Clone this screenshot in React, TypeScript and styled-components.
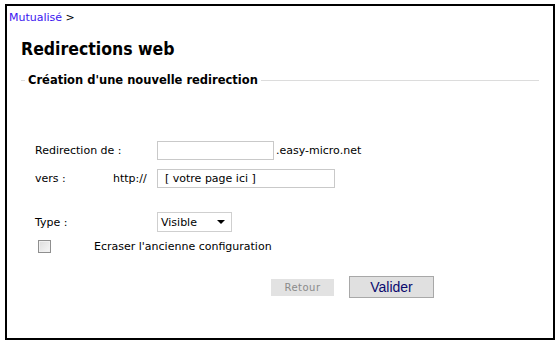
import React from "react";
import styled, { createGlobalStyle } from "styled-components";

const Global = createGlobalStyle`
  html, body { margin: 0; padding: 0; background: #fff; }
  body { font-family: "DejaVu Sans", Verdana, sans-serif; font-size: 11px; color: #000; }
`;

const Frame = styled.div`
  box-sizing: border-box;
  margin: 4px 0 0 5px;
  width: 550px;
  height: 336px;
  border: 2px solid #000;
  padding: 5px 14px 0 14px;
`;

const Breadcrumb = styled.div`
  height: 16px;
  line-height: 14px;
  margin-left: -12px;
  a { color: #3a14f0; text-decoration: none; }
`;

const Title = styled.h1`
  margin: 11px 0 0 0;
  font-family: "DejaVu Sans Condensed", "DejaVu Sans", sans-serif;
  font-stretch: condensed;
  font-size: 17.5px;
  font-weight: bold;
  line-height: 22px;
`;

const Section = styled.fieldset`
  margin: 13px 0 0 0;
  padding: 0;
  border: none;
  border-top: 1px solid #dcdcdc;
`;

const Legend = styled.legend`
  font-size: 11.5px;
  font-weight: bold;
  padding: 0 3px;
  margin-left: 4px;
`;

const Form = styled.div`
  padding: 53px 0 0 14px;
`;

const Row = styled.div<{ $mt?: number }>`
  display: grid;
  grid-template-columns: 78px 44px auto;
  align-items: center;
  margin-top: ${(p) => p.$mt ?? 0}px;
  height: 20px;
  white-space: nowrap;
`;

const Prefix = styled.span``;

const FieldGroup = styled.div`
  display: flex;
  align-items: center;
`;

const TextInput = styled.input<{ $w: number }>`
  box-sizing: border-box;
  width: ${(p) => p.$w}px;
  height: 19px;
  border: 1px solid #c9c9c9;
  padding: 0 7px;
  font-family: "DejaVu Sans", Verdana, sans-serif;
  font-size: 11px;
  color: #000;
  outline: none;
`;

const Suffix = styled.span`
  margin-left: 2px;
`;

const SelectBox = styled.div`
  box-sizing: border-box;
  width: 75px;
  height: 20px;
  border: 1px solid #cfcfcf;
  display: flex;
  align-items: center;
  justify-content: space-between;
  padding: 0 6px 0 3px;
`;

const Caret = styled.span`
  width: 0;
  height: 0;
  border-left: 4px solid transparent;
  border-right: 4px solid transparent;
  border-top: 4px solid #000;
`;

const CheckRow = styled.div`
  display: flex;
  align-items: center;
  margin-top: 4px;
  height: 20px;
`;

const Check = styled.span`
  box-sizing: border-box;
  width: 13px;
  height: 13px;
  margin-left: 3px;
  border: 1px solid #8f8f8f;
  background: linear-gradient(135deg, #dcdcdc, #f6f6f6);
  box-shadow: inset 0 0 0 1px #f0f0f0;
`;

const CheckLabel = styled.span`
  margin-left: 43px;
`;

const Buttons = styled.div`
  display: flex;
  align-items: center;
  margin: 20px 0 0 236px;
`;

const GhostButton = styled.button`
  box-sizing: border-box;
  width: 63px;
  height: 17px;
  border: none;
  background: #e2e2e2;
  color: #8a8a8a;
  font-family: "DejaVu Sans", Verdana, sans-serif;
  font-size: 10px;
  letter-spacing: 0.5px;
  padding: 0;
`;

const MainButton = styled.button`
  box-sizing: border-box;
  width: 85px;
  height: 22px;
  margin-left: 15px;
  border: 1px solid #a8a8a8;
  background: #e0e0e0;
  color: #0a0a6e;
  font-family: "Liberation Sans", Arial, sans-serif;
  font-size: 14px;
  padding: 0;
`;

export default function App() {
  return (
    <>
      <Global />
      <Frame>
        <Breadcrumb>
          <a href="#">Mutualisé</a> &gt;
        </Breadcrumb>
        <Title>Redirections web</Title>
        <Section>
          <Legend>Création d'une nouvelle redirection</Legend>
          <Form>
            <Row>
              <span>Redirection de :</span>
              <span />
              <FieldGroup>
                <TextInput $w={117} defaultValue="" />
                <Suffix>.easy-micro.net</Suffix>
              </FieldGroup>
            </Row>
            <Row $mt={8}>
              <span>vers :</span>
              <Prefix>http://</Prefix>
              <FieldGroup>
                <TextInput $w={178} defaultValue="[ votre page ici ]" />
              </FieldGroup>
            </Row>
            <Row $mt={24}>
              <span>Type :</span>
              <span />
              <SelectBox>
                <span>Visible</span>
                <Caret />
              </SelectBox>
            </Row>
            <CheckRow>
              <Check />
              <CheckLabel>Ecraser l'ancienne configuration</CheckLabel>
            </CheckRow>
            <Buttons>
              <GhostButton>Retour</GhostButton>
              <MainButton>Valider</MainButton>
            </Buttons>
          </Form>
        </Section>
      </Frame>
    </>
  );
}
